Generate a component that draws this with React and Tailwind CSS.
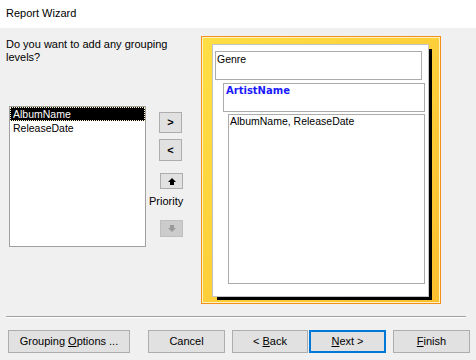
const Btn = ({ className = "", children }) => (
  <div
    className={
      "flex items-center justify-center bg-[#e1e1e1] border border-[#adadad] text-[11px] text-black " +
      className
    }
  >
    {children}
  </div>
);

const Arrow = ({ color }) => (
  <svg width="8" height="7" viewBox="0 0 8 7">
    <polygon points="4,0 8,4 6,4 6,7 2,7 2,4 0,4" fill={color} />
  </svg>
);

const App = () => {
  return (
    <div className="w-[476px] h-[360px] bg-[#f0f0f0] font-['Liberation_Sans',Arial,sans-serif] text-black overflow-hidden">
      <div className="h-[28px] bg-white flex items-center pl-[6px] pb-[2px] text-[11px]">
        Report Wizard
      </div>

      <div className="flex h-[288px]">
        {/* left side */}
        <div className="w-[201px] pl-[6px] pt-[10px]">
          <div className="text-[11px] leading-[13px]">
            Do you want to add any grouping
            <br />
            levels?
          </div>
          <div className="flex mt-[42px]">
            <div className="ml-[3px] w-[137px] h-[141px] bg-white border border-[#a0a0a0] text-[10.5px] leading-[14px]">
              <div className="h-[14px] bg-black text-white border border-dotted border-[#fff6c8] pl-[2px] leading-[12px]">
                AlbumName
              </div>
              <div className="h-[14px] pl-[3px]">ReleaseDate</div>
            </div>
            <div className="ml-[3px] w-[36px] flex flex-col">
              <Btn className="mt-[6px] ml-[10px] w-[23px] h-[21px] font-bold">&gt;</Btn>
              <Btn className="mt-[6px] ml-[10px] w-[23px] h-[22px] font-bold">&lt;</Btn>
              <Btn className="mt-[12px] ml-[11px] w-[23px] h-[16px]">
                <Arrow color="#000" />
              </Btn>
              <div className="mt-[6px] text-[11px] leading-[13px]">Priority</div>
              <div className="mt-[12px] ml-[11px] w-[23px] h-[17px] flex items-center justify-center bg-[#cccccc] border border-[#bfbfbf]">
                <div className="rotate-180 flex">
                  <Arrow color="#9a9a9a" />
                </div>
              </div>
            </div>
          </div>
        </div>

        {/* preview */}
        <div className="mt-[8px] w-[240px] h-[268px] border border-[#f39019] shadow-[inset_0_0_0_1px_#fff3c2] bg-linear-to-br from-[#ffdf44] to-[#fbbf2e] pl-[10px] pt-[7px]">
          <div className="w-[217px] h-[253px] bg-white border border-[#c4c4c4] shadow-[4px_4px_0_-1px_#000] flex flex-col text-[10.5px] leading-[13px]">
            <div className="ml-[2px] mt-[6px] w-[207px] h-[29px] border border-[#ababab] pl-[1px] pt-[1px]">
              Genre
            </div>
            <div className="ml-[10px] mt-[3px] w-[202px] h-[29px] border border-[#ababab] pl-[2px] font-['DejaVu_Sans',sans-serif] font-bold text-[10px] text-[#1a1aff]">
              ArtistName
            </div>
            <div className="ml-[15px] mt-[2px] w-[197px] h-[170px] border border-[#ababab] pl-[1px]">
              AlbumName, ReleaseDate
            </div>
          </div>
        </div>
      </div>

      <div className="ml-[6px] w-[460px] h-px bg-[#a0a0a0]" />
      <div className="ml-[6px] w-[460px] h-px bg-white" />

      <div className="flex mt-[12px]">
        <Btn className="ml-[8px] w-[122px] h-[23px]">
          <span>
            Grouping <u>O</u>ptions ...
          </span>
        </Btn>
        <Btn className="ml-[18px] w-[77px] h-[23px]">Cancel</Btn>
        <Btn className="ml-[7px] w-[76px] h-[23px]">
          <span>
            &lt; <u>B</u>ack
          </span>
        </Btn>
        <div className="ml-[1px] w-[77px] h-[23px] flex items-center justify-center bg-[#e1e1e1] border-2 border-[#0078d7] text-[11px]">
          <span>
            <u>N</u>ext &gt;
          </span>
        </div>
        <Btn className="ml-[7px] w-[77px] h-[23px]">
          <span>
            <u>F</u>inish
          </span>
        </Btn>
      </div>
    </div>
  );
};

export default App;
